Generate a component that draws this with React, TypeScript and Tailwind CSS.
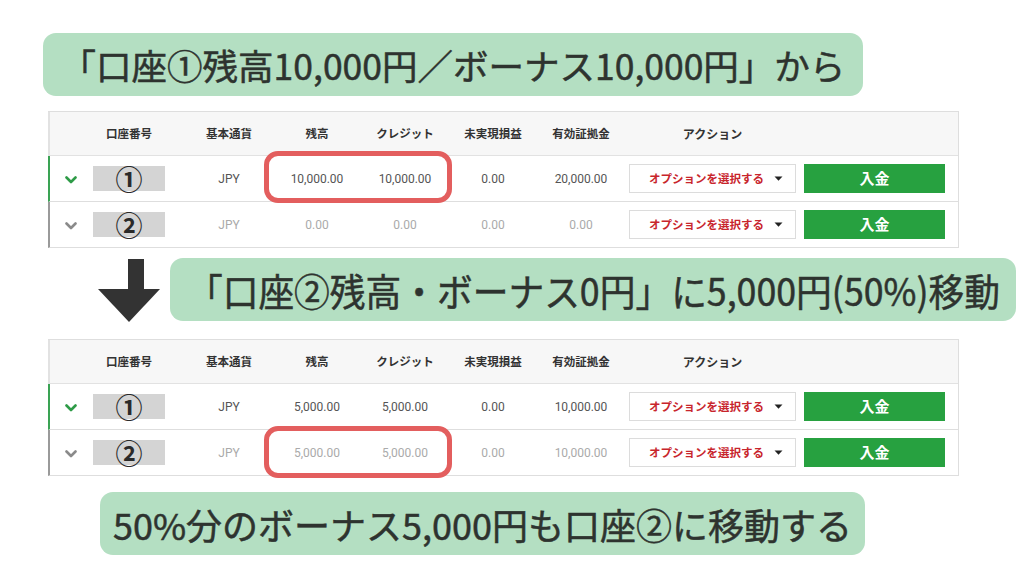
import React from "react";

const jp = { fontFamily: '"Noto Sans CJK JP", "Noto Sans", sans-serif' };
const num = { fontFamily: 'Roboto, "Noto Sans", "Noto Sans CJK JP", sans-serif' };

type Row = {
  n: string;
  active: boolean;
  vals: string[];
};

function Chevron({ color }: { color: string }) {
  return (
    <svg width="12" height="8" viewBox="0 0 12 8">
      <path d="M1.5 1.5 L6 6 L10.5 1.5" fill="none" stroke={color} strokeWidth="2.6" strokeLinecap="round" strokeLinejoin="round" />
    </svg>
  );
}

function Caret() {
  return (
    <svg width="9" height="5" viewBox="0 0 9 5">
      <path d="M0.5 0.5 L8.5 0.5 L4.5 4.8 Z" fill="#222" />
    </svg>
  );
}

function Table({ rows, boxTop }: { rows: Row[]; boxTop: number }) {
  const headers = ["基本通貨", "残高", "クレジット", "未実現損益", "有効証拠金"];
  return (
    <div className="relative w-[911px]">
      <div className="border-t border-r border-[#dedede]">
        <div className="flex h-[44px] items-center border-b border-l-2 border-[#e2e2e2] bg-[#f7f7f7] text-[11.5px] font-bold text-[#333]" style={jp}>
          <div className="w-[40px]" />
          <div className="w-[78px] text-center">口座番号</div>
          <div className="ml-[17px] flex">
            {headers.map((h) => (
              <div key={h} className="w-[88px] text-center">{h}</div>
            ))}
          </div>
          <div className="ml-[4px] w-[167px] text-center text-[12px]">アクション</div>
        </div>
        {rows.map((r) => (
          <div
            key={r.n}
            className={
              "flex h-[46px] items-center border-b border-b-[#dedede] border-l-2 bg-white " +
              (r.active ? "border-l-[#3aa354]" : "border-l-[#9a9a9a]")
            }
          >
            <div className="flex w-[40px] justify-center pl-[1px] pt-[2px]">
              <Chevron color={r.active ? "#2e9b47" : "#8a8a8a"} />
            </div>
            <div className="flex w-[78px] justify-center">
              <div className="flex h-[25px] w-[72px] items-center justify-center bg-[#d4d4d4] text-[27px] font-bold leading-none text-[#2a2a2a]" style={jp}>
                {r.n}
              </div>
            </div>
            <div className={"ml-[17px] flex text-[12px] " + (r.active ? "text-[#555]" : "text-[#aaa]")} style={num}>
              {r.vals.map((v, i) => (
                <div key={i} className="w-[88px] text-center">{v}</div>
              ))}
            </div>
            <div className="ml-[4px] flex h-[29px] w-[167px] items-center justify-between border border-[#dcdcdc] bg-white pl-[19px] pr-[12px]">
              <span className="text-[11.5px] font-bold text-[#c8252c]" style={jp}>オプションを選択する</span>
              <Caret />
            </div>
            <div className="ml-[8px] flex h-[29px] w-[141px] items-center justify-center bg-[#27a140] text-[15px] font-bold text-white" style={jp}>
              入金
            </div>
          </div>
        ))}
      </div>
      <div
        className="pointer-events-none absolute left-[216px] h-[52px] w-[188px] rounded-[14px] border-[5px] border-[#e35e5e]"
        style={{ top: boxTop }}
      />
    </div>
  );
}

function Banner({ children, className }: { children: React.ReactNode; className: string }) {
  return (
    <div
      className={"flex h-[63px] items-center justify-center overflow-hidden whitespace-nowrap rounded-[13px] bg-[#b4dfc2] font-normal text-[#2e332f] [-webkit-text-stroke:0.5px_#2e332f] " + className}
      style={jp}
    >
      {children}
    </div>
  );
}

export default function App() {
  const t1: Row[] = [
    { n: "①", active: true, vals: ["JPY", "10,000.00", "10,000.00", "0.00", "20,000.00"] },
    { n: "②", active: false, vals: ["JPY", "0.00", "0.00", "0.00", "0.00"] },
  ];
  const t2: Row[] = [
    { n: "①", active: true, vals: ["JPY", "5,000.00", "5,000.00", "0.00", "10,000.00"] },
    { n: "②", active: false, vals: ["JPY", "5,000.00", "5,000.00", "0.00", "10,000.00"] },
  ];
  return (
    <div className="h-[576px] w-[1024px] overflow-hidden bg-white">
      <div className="pl-[43px] pt-[33px]">
        <Banner className="w-[820px] text-[35.5px]">「口座①残高10,000円／ボーナス10,000円」から</Banner>
      </div>
      <div className="ml-[48px] mt-[15px]">
        <Table rows={t1} boxTop={40} />
      </div>
      <div className="mt-[10px] flex items-start">
        <svg className="ml-[98px] mt-[1px]" width="62" height="63" viewBox="0 0 62 63">
          <rect x="30" y="0" width="16" height="31" fill="#333" />
          <polygon points="0,30 62,30 31,63" fill="#333" />
        </svg>
        <Banner className="ml-[10px] w-[846px] text-[38px]">
          <span className="inline-block scale-x-[0.94]">「口座②残高・ボーナス0円」に5,000円(50%)移動</span>
        </Banner>
      </div>
      <div className="ml-[48px] mt-[17px]">
        <Table rows={t2} boxTop={87} />
      </div>
      <div className="ml-[100px] mt-[16px]">
        <Banner className="w-[765px] text-[36px]">50%分のボーナス5,000円も口座②に移動する</Banner>
      </div>
    </div>
  );
}
